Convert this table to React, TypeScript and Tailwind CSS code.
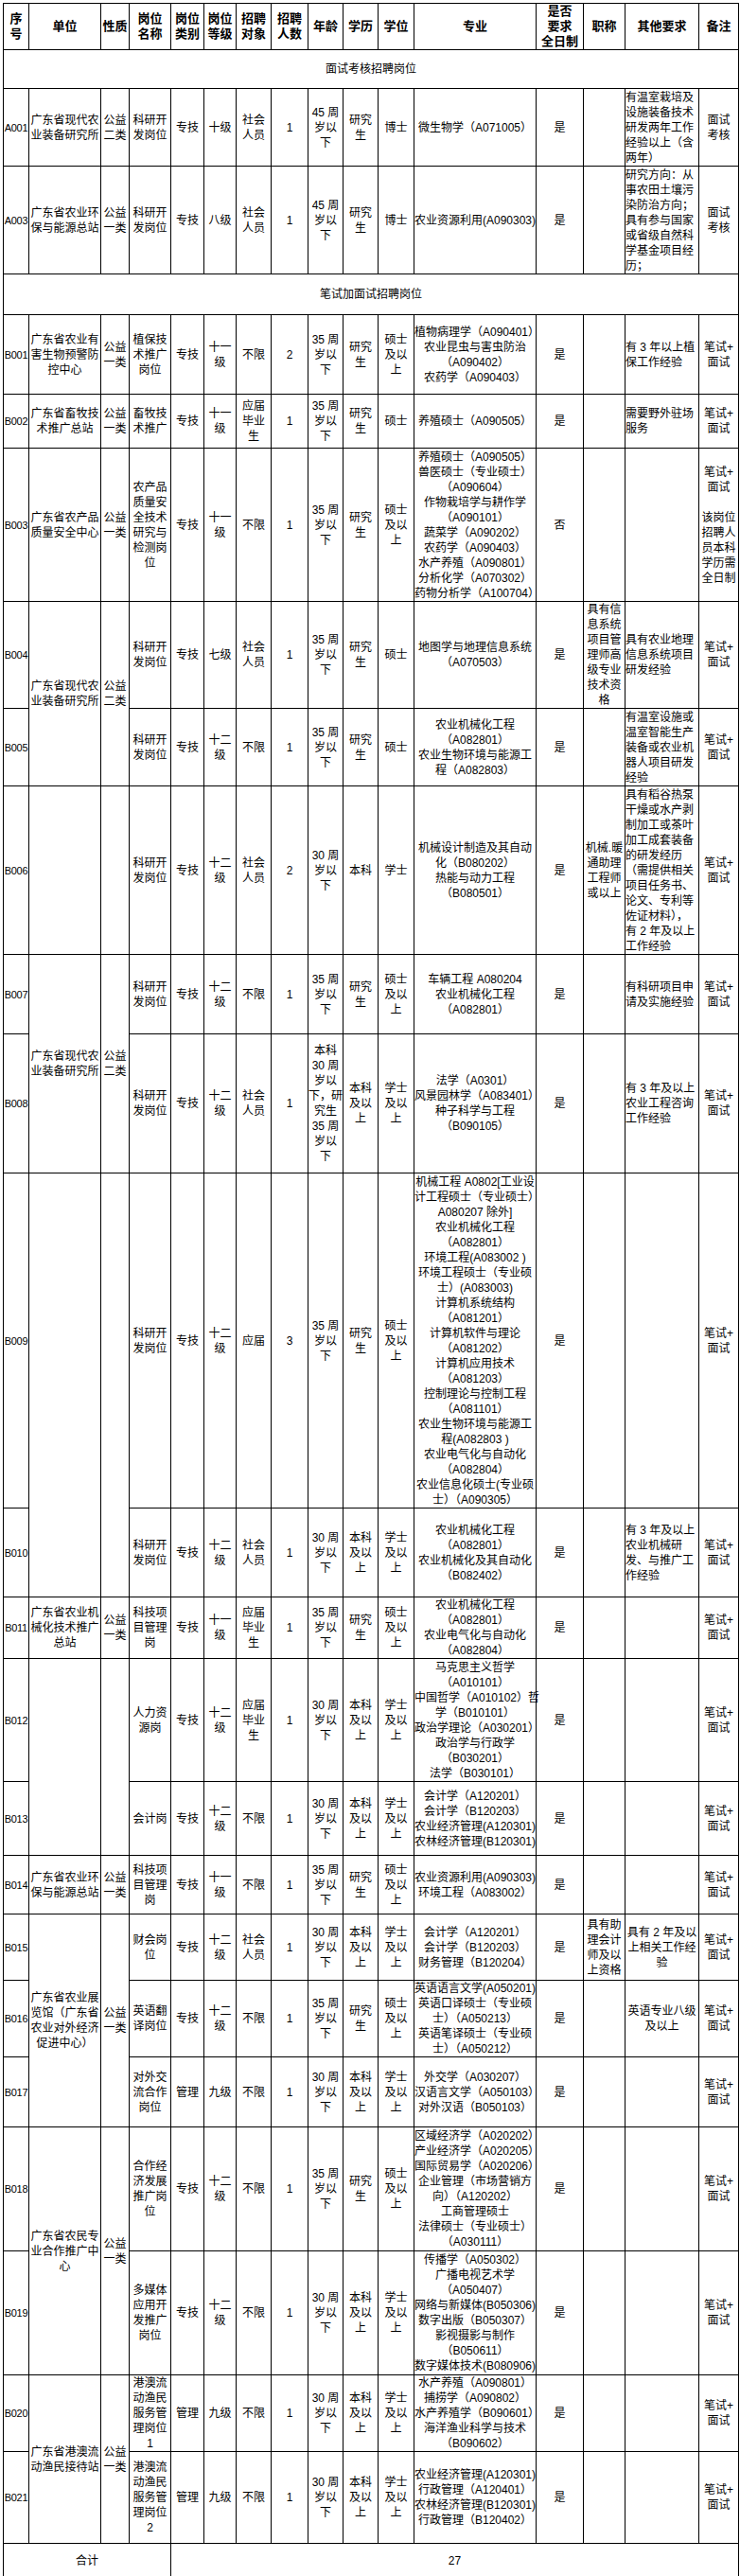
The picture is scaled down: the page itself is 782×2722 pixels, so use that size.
import React from 'react';

type Cell = string | { t: string; rs?: number; cs?: number; left?: boolean };
type Row = { h: string; header?: boolean; cells: Cell[] };

const rows: Row[] = [
  { h: 'h-[49px]', header: true, cells: ['序|号', '单位', '性质', '岗位|名称', '岗位|类别', '岗位|等级', '招聘|对象', '招聘|人数', '年龄', '学历', '学位', '专业', '是否|要求|全日制', '职称', '其他要求', '备注'] },
  { h: 'h-[41px]', cells: [{ t: '面试考核招聘岗位', cs: 16 }] },
  { h: 'h-[82px]', cells: ['A001', '广东省现代农|业装备研究所', '公益|二类', '科研开|发岗位', '专技', '十级', '社会|人员', '1', '45 周|岁以|下', '研究|生', '博士', '微生物学（A071005）', '是', '', { t: '有温室栽培及|设施装备技术|研发两年工作|经验以上（含|两年）', left: true }, '面试|考核'] },
  { h: 'h-[114px]', cells: ['A003', '广东省农业环|保与能源总站', '公益|一类', '科研开|发岗位', '专技', '八级', '社会|人员', '1', '45 周|岁以|下', '研究|生', '博士', '农业资源利用(A090303)', '是', '', { t: '研究方向：从|事农田土壤污|染防治方向；|具有参与国家|或省级自然科|学基金项目经|历；', left: true }, '面试|考核'] },
  { h: 'h-[43px]', cells: [{ t: '笔试加面试招聘岗位', cs: 16 }] },
  { h: 'h-[84px]', cells: ['B001', '广东省农业有|害生物预警防|控中心', '公益|一类', '植保技|术推广|岗位', '专技', '十一|级', '不限', '2', '35 周|岁以|下', '研究|生', '硕士|及以|上', '植物病理学（A090401）|农业昆虫与害虫防治|（A090402）|农药学（A090403）', '是', '', { t: '有 3 年以上植|保工作经验', left: true }, '笔试+|面试'] },
  { h: 'h-[57px]', cells: ['B002', '广东省畜牧技|术推广总站', '公益|一类', '畜牧技|术推广', '专技', '十一|级', '应届|毕业|生', '1', '35 周|岁以|下', '研究|生', '硕士', '养殖硕士（A090505）', '是', '', { t: '需要野外驻场|服务', left: true }, '笔试+|面试'] },
  { h: 'h-[162px]', cells: ['B003', '广东省农产品|质量安全中心', '公益|一类', '农产品|质量安|全技术|研究与|检测岗|位', '专技', '十一|级', '不限', '1', '35 周|岁以|下', '研究|生', '硕士|及以|上', '养殖硕士（A090505）|兽医硕士（专业硕士）|（A090604）|作物栽培学与耕作学|（A090101）|蔬菜学（A090202）|农药学（A090403）|水产养殖（A090801）|分析化学（A070302）|药物分析学（A100704）', '否', '', '', '笔试+|面试||该岗位|招聘人|员本科|学历需|全日制'] },
  { h: 'h-[112px]', cells: ['B004', { t: '广东省现代农|业装备研究所', rs: 2 }, { t: '公益|二类', rs: 2 }, '科研开|发岗位', '专技', '七级', '社会|人员', '1', '35 周|岁以|下', '研究|生', '硕士', '地图学与地理信息系统|（A070503）', '是', '具有信|息系统|项目管|理师高|级专业|技术资|格', { t: '具有农业地理|信息系统项目|研发经验', left: true }, '笔试+|面试'] },
  { h: 'h-[82px]', cells: ['B005', '科研开|发岗位', '专技', '十二|级', '不限', '1', '35 周|岁以|下', '研究|生', '硕士', '农业机械化工程|（A082801）|农业生物环境与能源工|程（A082803）', '是', '', { t: '有温室设施或|温室智能生产|装备或农业机|器人项目研发|经验', left: true }, '笔试+|面试'] },
  { h: 'h-[178px]', cells: ['B006', '', '', '科研开|发岗位', '专技', '十二|级', '社会|人员', '2', '30 周|岁以|下', '本科', '学士', '机械设计制造及其自动|化（B080202）|热能与动力工程|（B080501）', '是', '机械.暖|通助理|工程师|或以上', { t: '具有稻谷热泵|干燥或水产剥|制加工或茶叶|加工成套装备|的研发经历|（需提供相关|项目任务书、|论文、专利等|佐证材料），|有 2 年及以上|工作经验', left: true }, '笔试+|面试'] },
  { h: 'h-[84px]', cells: ['B007', { t: '广东省现代农|业装备研究所', rs: 2 }, { t: '公益|二类', rs: 2 }, '科研开|发岗位', '专技', '十二|级', '不限', '1', '35 周|岁以|下', '研究|生', '硕士|及以|上', '车辆工程 A080204|农业机械化工程|（A082801）', '是', '', { t: '有科研项目申|请及实施经验', left: true }, '笔试+|面试'] },
  { h: 'h-[147px]', cells: ['B008', '科研开|发岗位', '专技', '十二|级', '社会|人员', '1', '本科|30 周|岁以|下，研|究生|35 周|岁以|下', '本科|及以|上', '学士|及以|上', '法学（A0301）|风景园林学（A083401）|种子科学与工程|（B090105）', '是', '', { t: '有 3 年及以上|农业工程咨询|工作经验', left: true }, '笔试+|面试'] },
  { h: 'h-[354px]', cells: ['B009', { t: '', rs: 2 }, { t: '', rs: 2 }, '科研开|发岗位', '专技', '十二|级', '应届', '3', '35 周|岁以|下', '研究|生', '硕士|及以|上', '机械工程 A0802[工业设|计工程硕士（专业硕士）|A080207 除外]|农业机械化工程|（A082801）|环境工程(A083002 )|环境工程硕士（专业硕|士）(A083003)|计算机系统结构|（A081201）|计算机软件与理论|（A081202）|计算机应用技术|（A081203）|控制理论与控制工程|（A081101）|农业生物环境与能源工|程(A082803 )|农业电气化与自动化|（A082804）|农业信息化硕士(专业硕|士）（A090305）', '是', '', '', '笔试+|面试'] },
  { h: 'h-[94px]', cells: ['B010', '科研开|发岗位', '专技', '十二|级', '社会|人员', '1', '30 周|岁以|下', '本科|及以|上', '学士|及以|上', '农业机械化工程|（A082801）|农业机械化及其自动化|（B082402）', '是', '', { t: '有 3 年及以上|农业机械研|发、与推广工|作经验', left: true }, '笔试+|面试'] },
  { h: 'h-[64px]', cells: ['B011', '广东省农业机|械化技术推广|总站', '公益|一类', '科技项|目管理|岗', '专技', '十一|级', '应届|毕业|生', '1', '35 周|岁以|下', '研究|生', '硕士|及以|上', '农业机械化工程|（A082801）|农业电气化与自动化|（A082804）', '是', '', '', '笔试+|面试'] },
  { h: 'h-[130px]', cells: ['B012', { t: '', rs: 2 }, { t: '', rs: 2 }, '人力资|源岗', '专技', '十二|级', '应届|毕业|生', '1', '30 周|岁以|下', '本科|及以|上', '学士|及以|上', '马克思主义哲学|（A010101）|中国哲学（A010102）哲|学（B010101）|政治学理论（A030201）|政治学与行政学|（B030201）|法学（B030101）', '是', '', '', '笔试+|面试'] },
  { h: 'h-[78px]', cells: ['B013', '会计岗', '专技', '十二|级', '不限', '1', '30 周|岁以|下', '本科|及以|上', '学士|及以|上', '会计学（A120201）|会计学（B120203）|农业经济管理(A120301)|农林经济管理(B120301)', '是', '', '', '笔试+|面试'] },
  { h: 'h-[62px]', cells: ['B014', '广东省农业环|保与能源总站', '公益|一类', '科技项|目管理|岗', '专技', '十一|级', '不限', '1', '35 周|岁以|下', '研究|生', '硕士|及以|上', '农业资源利用(A090303)|环境工程（A083002）', '是', '', '', '笔试+|面试'] },
  { h: 'h-[70px]', cells: ['B015', { t: '广东省农业展|览馆（广东省|农业对外经济|促进中心）', rs: 3 }, { t: '公益|一类', rs: 3 }, '财会岗|位', '专技', '十二|级', '社会|人员', '1', '30 周|岁以|下', '本科|及以|上', '学士|及以|上', '会计学（A120201）|会计学（B120203）|财务管理（B120204）', '是', '具有助|理会计|师及以|上资格', '具有 2 年及以|上相关工作经|验', '笔试+|面试'] },
  { h: 'h-[81px]', cells: ['B016', '英语翻|译岗位', '专技', '十二|级', '不限', '1', '35 周|岁以|下', '研究|生', '硕士|及以|上', '英语语言文学(A050201)|英语口译硕士（专业硕|士）（A050213）|英语笔译硕士（专业硕|士）（A050212）', '是', '', '英语专业八级|及以上', '笔试+|面试'] },
  { h: 'h-[74px]', cells: ['B017', '对外交|流合作|岗位', '管理', '九级', '不限', '1', '30 周|岁以|下', '本科|及以|上', '学士|及以|上', '外交学（A030207）|汉语言文学（A050103）|对外汉语（B050103）', '是', '', '', '笔试+|面试'] },
  { h: 'h-[131px]', cells: ['B018', { t: '广东省农民专|业合作推广中|心', rs: 2 }, { t: '公益|一类', rs: 2 }, '合作经|济发展|推广岗|位', '专技', '十二|级', '不限', '1', '35 周|岁以|下', '研究|生', '硕士|及以|上', '区域经济学（A020202）|产业经济学（A020205）|国际贸易学（A020206）|企业管理（市场营销方|向）（A120202）|工商管理硕士|法律硕士（专业硕士）|（A030111）', '是', '', '', '笔试+|面试'] },
  { h: 'h-[131px]', cells: ['B019', '多媒体|应用开|发推广|岗位', '专技', '十二|级', '不限', '1', '30 周|岁以|下', '本科|及以|上', '学士|及以|上', '传播学（A050302）|广播电视艺术学|（A050407）|网络与新媒体(B050306)|数字出版（B050307）|影视摄影与制作|（B050611）|数字媒体技术(B080906)', '是', '', '', '笔试+|面试'] },
  { h: 'h-[80px]', cells: ['B020', { t: '广东省港澳流|动渔民接待站', rs: 2 }, { t: '公益|一类', rs: 2 }, '港澳流|动渔民|服务管|理岗位|1', '管理', '九级', '不限', '1', '30 周|岁以|下', '本科|及以|上', '学士|及以|上', '水产养殖（A090801）|捕捞学（A090802）|水产养殖学（B090601）|海洋渔业科学与技术|（B090602）', '是', '', '', '笔试+|面试'] },
  { h: 'h-[97px]', cells: ['B021', '港澳流|动渔民|服务管|理岗位|2', '管理', '九级', '不限', '1', '30 周|岁以|下', '本科|及以|上', '学士|及以|上', '农业经济管理(A120301)|行政管理（A120401）|农林经济管理(B120301)|行政管理（B120402）', '是', '', '', '笔试+|面试'] },
  { h: 'h-[36px]', cells: [{ t: '合计', cs: 4 }, { t: '27', cs: 12 }] },
];

const widths = ['w-[27px]', 'w-[76px]', 'w-[30px]', 'w-[44px]', 'w-[35px]', 'w-[34px]', 'w-[37px]', 'w-[39px]', 'w-[37px]', 'w-[37px]', 'w-[38px]', 'w-[129px]', 'w-[50px]', 'w-[44px]', 'w-[78px]', 'w-[42px]'];

function Lines({ t }: { t: string }) {
  if (!t) return null;
  return (
    <>
      {t.split('|').map((s, i) => (
        <div key={i} className="whitespace-nowrap">
          {s === '' ? '\u00a0' : s}
        </div>
      ))}
    </>
  );
}

export default function App() {
  return (
    <div className="min-h-[2722px] w-[782px] bg-white pl-[3px] pt-[3px] text-black font-['Liberation_Sans','Noto_Sans_CJK_SC',sans-serif] text-[12px] leading-[16px]">
      <table className="w-[777px] table-fixed border-collapse">
        <colgroup>
          {widths.map((w, i) => (
            <col key={i} className={w} />
          ))}
        </colgroup>
        <tbody>
          {rows.map((r, ri) => (
            <tr key={ri} className={r.h}>
              {r.cells.map((c, ci) => {
                const cell = typeof c === 'string' ? { t: c } : c;
                const isSeq = !r.header && ci === 0 && !cell.cs;
                return (
                  <td
                    key={ci}
                    rowSpan={cell.rs}
                    colSpan={cell.cs}
                    className={`overflow-visible border border-black p-0 align-middle ${cell.left ? 'text-left' : 'text-center'} ${r.header ? 'font-bold text-[13px]' : ''} ${isSeq ? 'text-[11px] tracking-[-0.3px]' : ''}`}
                  >
                    <Lines t={cell.t} />
                  </td>
                );
              })}
            </tr>
          ))}
        </tbody>
      </table>
    </div>
  );
}
